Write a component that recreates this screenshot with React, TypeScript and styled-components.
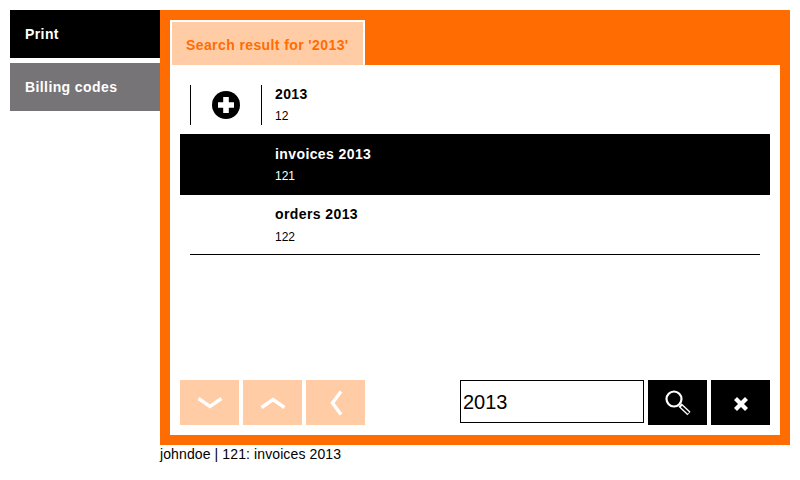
import React from "react";
import styled, { createGlobalStyle } from "styled-components";

const Global = createGlobalStyle`
  html, body { margin: 0; padding: 0; background: #fff; }
  body { font-family: "Liberation Sans", Arial, sans-serif; }
`;
const Page = styled.div`
  width: 800px; height: 480px; box-sizing: border-box; padding: 10px 10px 0;
  display: flex; overflow: hidden;
`;
const Sidebar = styled.nav`
  width: 150px; flex: none; display: flex; flex-direction: column; gap: 5px;
`;
const NavItem = styled.div<{ $active?: boolean }>`
  height: 48px; box-sizing: border-box; padding: 16px 0 0 15px;
  background: ${p => (p.$active ? "#000" : "#767476")};
  color: #fff; font-size: 14px; line-height: 17px; font-weight: bold; letter-spacing: 0.4px;
`;
const Column = styled.div`
  width: 630px; flex: none; display: flex; flex-direction: column;
`;
const Frame = styled.main`
  height: 435px; box-sizing: border-box; background: #ff6c02; padding: 10px;
  display: flex; flex-direction: column;
`;
const TabBar = styled.div`
  height: 45px; flex: none; display: flex;
`;
const Tab = styled.div`
  width: 195px; box-sizing: border-box; background: #ffcca5; color: #ff6c02;
  border: solid #fff; border-width: 2px 2px 0; padding: 15px 0 0 14px;
  font-size: 14px; line-height: 17px; font-weight: bold; letter-spacing: 0.4px;
`;
const Panel = styled.div`
  flex: 1; background: #fff; padding: 9px 10px 10px; display: flex; flex-direction: column;
`;
const List = styled.div`
  flex: 1; display: flex; flex-direction: column;
`;
const Row = styled.div<{ $selected?: boolean; $height: number }>`
  height: ${p => p.$height}px; box-sizing: border-box; display: flex; align-items: flex-start;
  background: ${p => (p.$selected ? "#000" : "#fff")};
  color: ${p => (p.$selected ? "#fff" : "#000")};
`;
const LastRule = styled.div`
  height: 1px; margin: -1px 10px 0; background: #000; position: relative;
`;
const IconCell = styled.div<{ $bordered?: boolean }>`
  width: 72px; height: 40px; margin: 11px 0 0 10px; box-sizing: border-box; flex: none;
  display: flex; align-items: center; justify-content: center;
  border-style: solid; border-color: #000; border-width: ${p => (p.$bordered ? "0 1px" : "0")};
`;
const RowText = styled.div<{ $top: number }>`
  margin: ${p => p.$top}px 0 0 13px;
`;
const Title = styled.div`
  font-size: 14px; line-height: 17px; font-weight: bold; letter-spacing: 0.4px;
`;
const Code = styled.div<{ $gap: number }>`
  font-size: 12px; line-height: 14px; margin-top: ${p => p.$gap}px;
`;
const Toolbar = styled.div`
  height: 45px; flex: none; display: flex; justify-content: space-between;
`;
const Group = styled.div`
  display: flex; gap: 4px;
`;
const ToolButton = styled.button<{ $dark?: boolean }>`
  width: 59px; height: 45px; padding: 0; border: 0; display: flex;
  align-items: center; justify-content: center;
  background: ${p => (p.$dark ? "#000" : "#ffcca5")};
`;
const SearchInput = styled.input`
  width: 184px; height: 43px; box-sizing: border-box; border: 1px solid #000; padding: 2px 2px 0;
  font-family: "Liberation Sans", Arial, sans-serif; font-size: 20px; color: #000; background: #fff;
  outline: none;
`;
const Status = styled.div`
  font-size: 14px; line-height: 16px; margin-top: 1px; color: #000; white-space: pre; letter-spacing: 0.11px;
`;

const Plus = () => (
  <svg width="28" height="28" viewBox="0 0 28 28">
    <circle cx="14" cy="14" r="14" fill="#000" />
    <path d="M11.2 6h5.6v5.2H22v5.6h-5.2V22h-5.6v-5.2H6v-5.6h5.2z" fill="#fff" />
  </svg>
);
const Chevron = ({ d }: { d: string }) => (
  <svg width="30" height="30" viewBox="0 0 30 30">
    <path d={d} fill="none" stroke="#fff" strokeWidth="3.4" strokeLinecap="butt" />
  </svg>
);
const Magnifier = () => (
  <svg width="28" height="28" viewBox="0 0 28 28" fill="none" stroke="#fff">
    <circle cx="10" cy="10" r="7.5" strokeWidth="2.2" />
    <path d="M16 16l9 8.5" strokeWidth="4.5" />
    <path d="M17.5 17.5l7 6.5" strokeWidth="1.8" stroke="#000" />
  </svg>
);
const Cross = () => (
  <svg width="16" height="20" viewBox="0 0 16 20">
    <path d="M4 4l4 4 4-4 3 3-4 4 4 4-3 3-4-4-4 4-3-3 4-4-4-4z" fill="#fff" />
  </svg>
);

export default function App() {
  return (
    <Page>
      <Global />
      <Sidebar>
        <NavItem $active>Print</NavItem>
        <NavItem>Billing codes</NavItem>
      </Sidebar>
      <Column>
        <Frame>
          <TabBar>
            <Tab>Search result for '2013'</Tab>
          </TabBar>
          <Panel>
            <List>
              <Row $height={60}>
                <IconCell $bordered><Plus /></IconCell>
                <RowText $top={12}>
                  <Title>2013</Title>
                  <Code $gap={6}>12</Code>
                </RowText>
              </Row>
              <Row $selected $height={61}>
                <IconCell />
                <RowText $top={12}>
                  <Title>invoices 2013</Title>
                  <Code $gap={6}>121</Code>
                </RowText>
              </Row>
              <Row $height={60}>
                <IconCell />
                <RowText $top={11}>
                  <Title>orders 2013</Title>
                  <Code $gap={7}>122</Code>
                </RowText>
              </Row>
              <LastRule />
            </List>
            <Toolbar>
              <Group>
                <ToolButton aria-label="down"><Chevron d="M3.5 10.5l11.5 8 11.5-8" /></ToolButton>
                <ToolButton aria-label="up"><Chevron d="M3.5 19.5l11.5-8 11.5 8" /></ToolButton>
                <ToolButton aria-label="back"><Chevron d="M20 3.5l-8.5 11.5 8.5 11.5" /></ToolButton>
              </Group>
              <Group>
                <SearchInput defaultValue="2013" />
                <ToolButton $dark aria-label="search"><Magnifier /></ToolButton>
                <ToolButton $dark aria-label="clear"><Cross /></ToolButton>
              </Group>
            </Toolbar>
          </Panel>
        </Frame>
        <Status>johndoe | 121: invoices 2013</Status>
      </Column>
    </Page>
  );
}
